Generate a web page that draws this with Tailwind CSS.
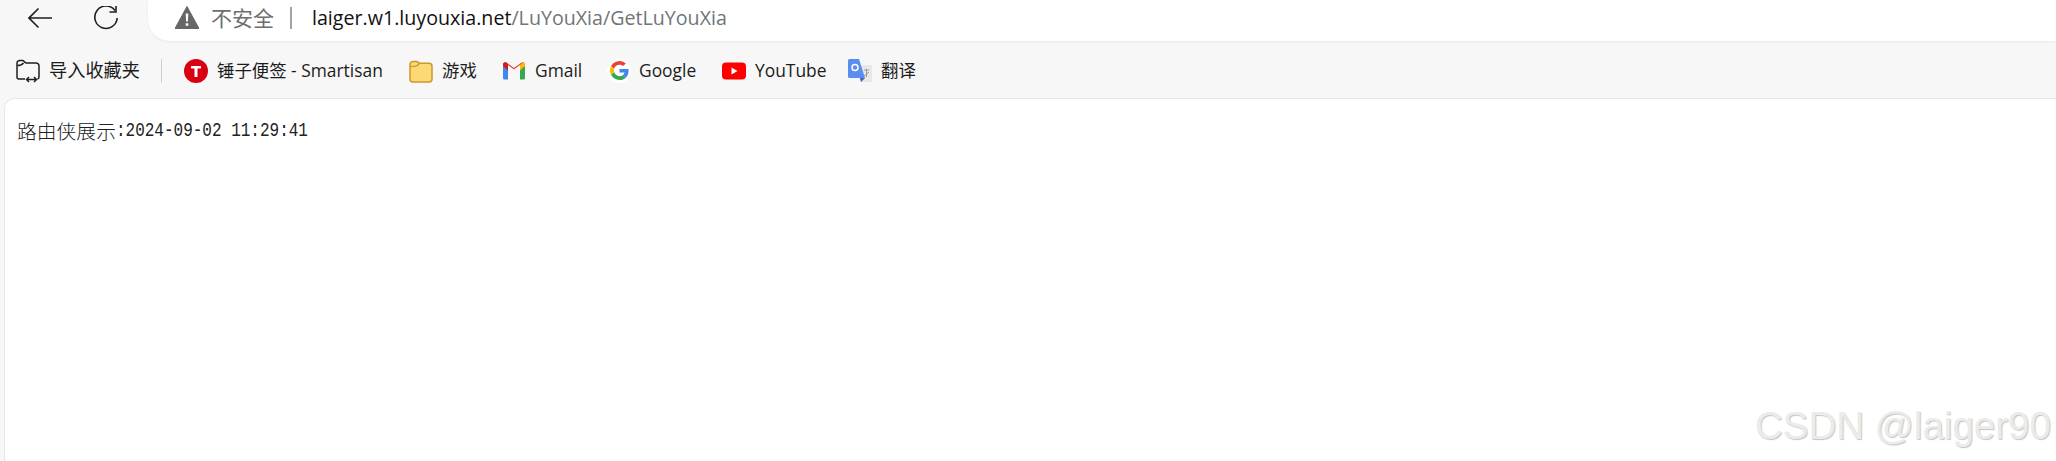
<!DOCTYPE html>
<html lang="zh-CN">

<head>
    <meta charset="UTF-8">
    <title>路由侠展示</title>
    <script src="https://cdn.jsdelivr.net/npm/@tailwindcss/browser@4"></script>
</head>

<body class="relative h-[461px] w-[2056px] overflow-hidden bg-[#f7f7f7] font-['Open_Sans','Noto_Sans_CJK_SC',sans-serif]">
    <!-- toolbar -->
    <div class="flex h-[41px] items-center">
        <div class="flex w-[148px] items-center pb-[5px] pl-[28px]">
            <svg class="h-[24px] w-[24px]" viewBox="0 0 24 24" fill="none" stroke="#1f1f1f" stroke-width="1.6">
                <path d="M24 12H1M10.5 2.5 1 12l9.500 9.500" />
            </svg>
            <svg class="ml-[42px] h-[24px] w-[24px]" viewBox="0 0 24 24" fill="none" stroke="#1f1f1f" stroke-width="1.6">
                <path d="M21 4.500A11.200 11.200 0 1 0 23.200 12" />
                <path d="M22 0v6h-6.500" />
            </svg>
        </div>
        <div class="flex h-[41px] flex-1 items-center rounded-bl-[22px] bg-white pb-[5px] pl-[27px] shadow-[0_1px_3px_rgba(0,0,0,0.06)]">
            <svg class="h-[24px] w-[24px]" viewBox="0 0 24 24">
                <path d="M12 .5 24 22.500H0Z" fill="#666" stroke="#666" stroke-linejoin="round" />
                <path d="M10.700 7.500h2.600l-.4 8h-1.800ZM10.700 17.200h2.600v2.600h-2.600Z" fill="#fff" />
            </svg>
            <span class="ml-[12px] text-[21px] leading-none text-[#6e6e6e]">不安全</span>
            <span class="ml-[16px] h-[22px] w-[2px] bg-[#a3a3a3]"></span>
            <p class="ml-[20px] text-[19.650px] leading-none text-[#111]">laiger.w1.luyouxia.net<span class="text-[#70757a]">/LuYouXia/GetLuYouXia</span></p>
        </div>
    </div>

    <!-- bookmarks -->
    <div class="flex h-[57px] items-center pt-[2px] pl-[16px] text-[17.400px] leading-none text-[#1c1c1c]">
        <svg class="h-[24px] w-[24px]" viewBox="0 0 24 24" fill="none" stroke="#1f1f1f" stroke-width="1.500">
            <path d="M9 20H3a2 2 0 0 1-2-2V4a2.500 2.500 0 0 1 2.500-2.500h3c1.800 0 2 2.500 4 2.500h9A3 3 0 0 1 23 7v11a2 2 0 0 1-1.500 2" />
            <path d="M1.500 6.500C4 6.500 6 6 7.500 4M11 20.500h9M13 18l-2.500 2.500L13 23M18 18l2.500 2.500L18 23" />
        </svg>
        <span class="ml-[9px] w-[91px] whitespace-nowrap text-[18.200px]">导入收藏夹</span>
        <span class="ml-[21px] h-[24px] w-px bg-[#d0d0d0]"></span>
        <svg class="ml-[22px] h-[24px] w-[24px]" viewBox="0 0 24 24">
            <circle cx="12" cy="12" r="12" fill="#d90012" />
            <path d="M7 7h10v2.500h-3.500V18h-3V9.500H7Z" fill="#fff" />
        </svg>
        <span class="ml-[9px] w-[166px] whitespace-nowrap">锤子便签 - Smartisan</span>
        <svg class="ml-[26px] h-[24px] w-[24px]" viewBox="0 0 24 24">
            <path d="M1 5.500A3 3 0 0 1 4 2.500h3.500c1.500 0 2 1.800 3.500 1.800h9A3 3 0 0 1 23 7.300V20a3 3 0 0 1-3 3H4a3 3 0 0 1-3-3Z" fill="#fdd975" stroke="#c99a27" stroke-width="1.500" />
            <path d="M1.500 7.500c4 0 6.500 0 9-3" fill="none" stroke="#c99a27" stroke-width="1.200" />
        </svg>
        <span class="ml-[9px] w-[36px] whitespace-nowrap">游戏</span>
        <svg class="ml-[25px] h-[24px] w-[22px]" viewBox="0 0 22 18">
            <path d="M0 3v13a1.500 1.500 0 0 0 1.500 1.500H5V8Z" fill="#4285f4" />
            <path d="M17 8v9.500h3.500A1.500 1.500 0 0 0 22 16V3Z" fill="#34a853" />
            <path d="M5 8.500 0 4V2.500C0 .500 2.200-.500 3.800.700L11 6l7.200-5.300C19.800-.500 22 .500 22 2.500V4l-5 4.500V3l-6 4.500L5 3Z" fill="#ea4335" />
            <path d="M17 3l2-1.800C20.500-.500 22 .800 22 2.500V4l-5 4.500Z" fill="#fbbc04" />
            <path d="M0 2.500V4l5 4.500V3L3.800.700C2.200-.500 0 .500 0 2.500Z" fill="#c5221f" />
        </svg>
        <span class="ml-[10px] w-[45px] whitespace-nowrap">Gmail</span>
        <span class="ml-[27px] flex h-[24px] w-[24px] items-center justify-center rounded-full bg-white">
            <svg class="h-[19px] w-[19px]" viewBox="0 0 48 48">
                <path fill="#ea4335" d="M24 9.500c3.500 0 6.700 1.300 9.200 3.400l6.800-6.800C35.800 2.400 30.200 0 24 0 14.600 0 6.500 5.400 2.600 13.200l7.900 6.200C12.400 13.700 17.700 9.500 24 9.500z" />
                <path fill="#4285f4" d="M47 24.500c0-1.600-.2-3.100-.4-4.500H24v9h12.900c-.6 3-2.200 5.500-4.700 7.200l7.700 6C44.400 38 47 31.800 47 24.500z" />
                <path fill="#fbbc05" d="M10.500 28.600A14.500 14.500 0 0 1 10.500 19.400l-7.900-6.200a24 24 0 0 0 0 21.600z" />
                <path fill="#34a853" d="M24 48c6.500 0 11.900-2.100 15.900-5.800l-7.700-6c-2.200 1.500-4.900 2.300-8.200 2.300-6.300 0-11.600-4.200-13.500-9.900l-7.900 6.200C6.500 42.600 14.600 48 24 48z" />
            </svg>
        </span>
        <span class="ml-[8px] w-[58px] whitespace-nowrap">Google</span>
        <svg class="ml-[25px] h-[24px] w-[24px]" viewBox="0 0 24 17">
            <rect width="24" height="17" rx="4" fill="#f00" />
            <path d="M9.500 5v7l6-3.500Z" fill="#fff" />
        </svg>
        <span class="ml-[9px] w-[68px] whitespace-nowrap">YouTube</span>
        <svg class="ml-[25px] h-[24px] w-[24px]" viewBox="0 0 24 24">
            <path d="M10 6h13a1 1 0 0 1 1 1v16H12Z" fill="#e8e8e8" />
            <path d="M1.500 0H11l6 19H1.500A1.500 1.500 0 0 1 0 17.500V1.500A1.500 1.500 0 0 1 1.500 0Z" fill="#5a8df0" />
            <path d="M12 19h5l-4 4Z" fill="#3e5fc4" />
            <circle cx="7" cy="8.500" r="3" fill="none" stroke="#fff" stroke-width="1.500" />
            <path d="M16 11h5M18.500 10v8M16 17l5-4" stroke="#9a9a9a" stroke-width="1" />
        </svg>
        <span class="ml-[9px] whitespace-nowrap">翻译</span>
    </div>

    <!-- page -->
    <main class="ml-[4px] h-[363px] rounded-tl-[10px] border-t border-l border-[#e6e6e6] bg-white pt-[21px] pl-[12px]">
        <p class="flex h-[22px] items-center whitespace-nowrap text-[#222]">
            <span class="font-['Noto_Sans_CJK_SC',sans-serif] text-[19.800px] font-light leading-none">路由侠展示</span>
            <span class="inline-block origin-center scale-y-[1.25] font-['Liberation_Mono',monospace] text-[16px] leading-none">:2024-09-02 11:29:41</span>
        </p>
    </main>

    <!-- watermark -->
    <span class="absolute top-[407px] left-[1755px] whitespace-nowrap font-['Liberation_Sans',sans-serif] text-[38.500px] leading-none text-[#ebebeb] [text-shadow:1px_1px_1px_#c4c4c4]">CSDN @laiger90</span>
</body>

</html>
